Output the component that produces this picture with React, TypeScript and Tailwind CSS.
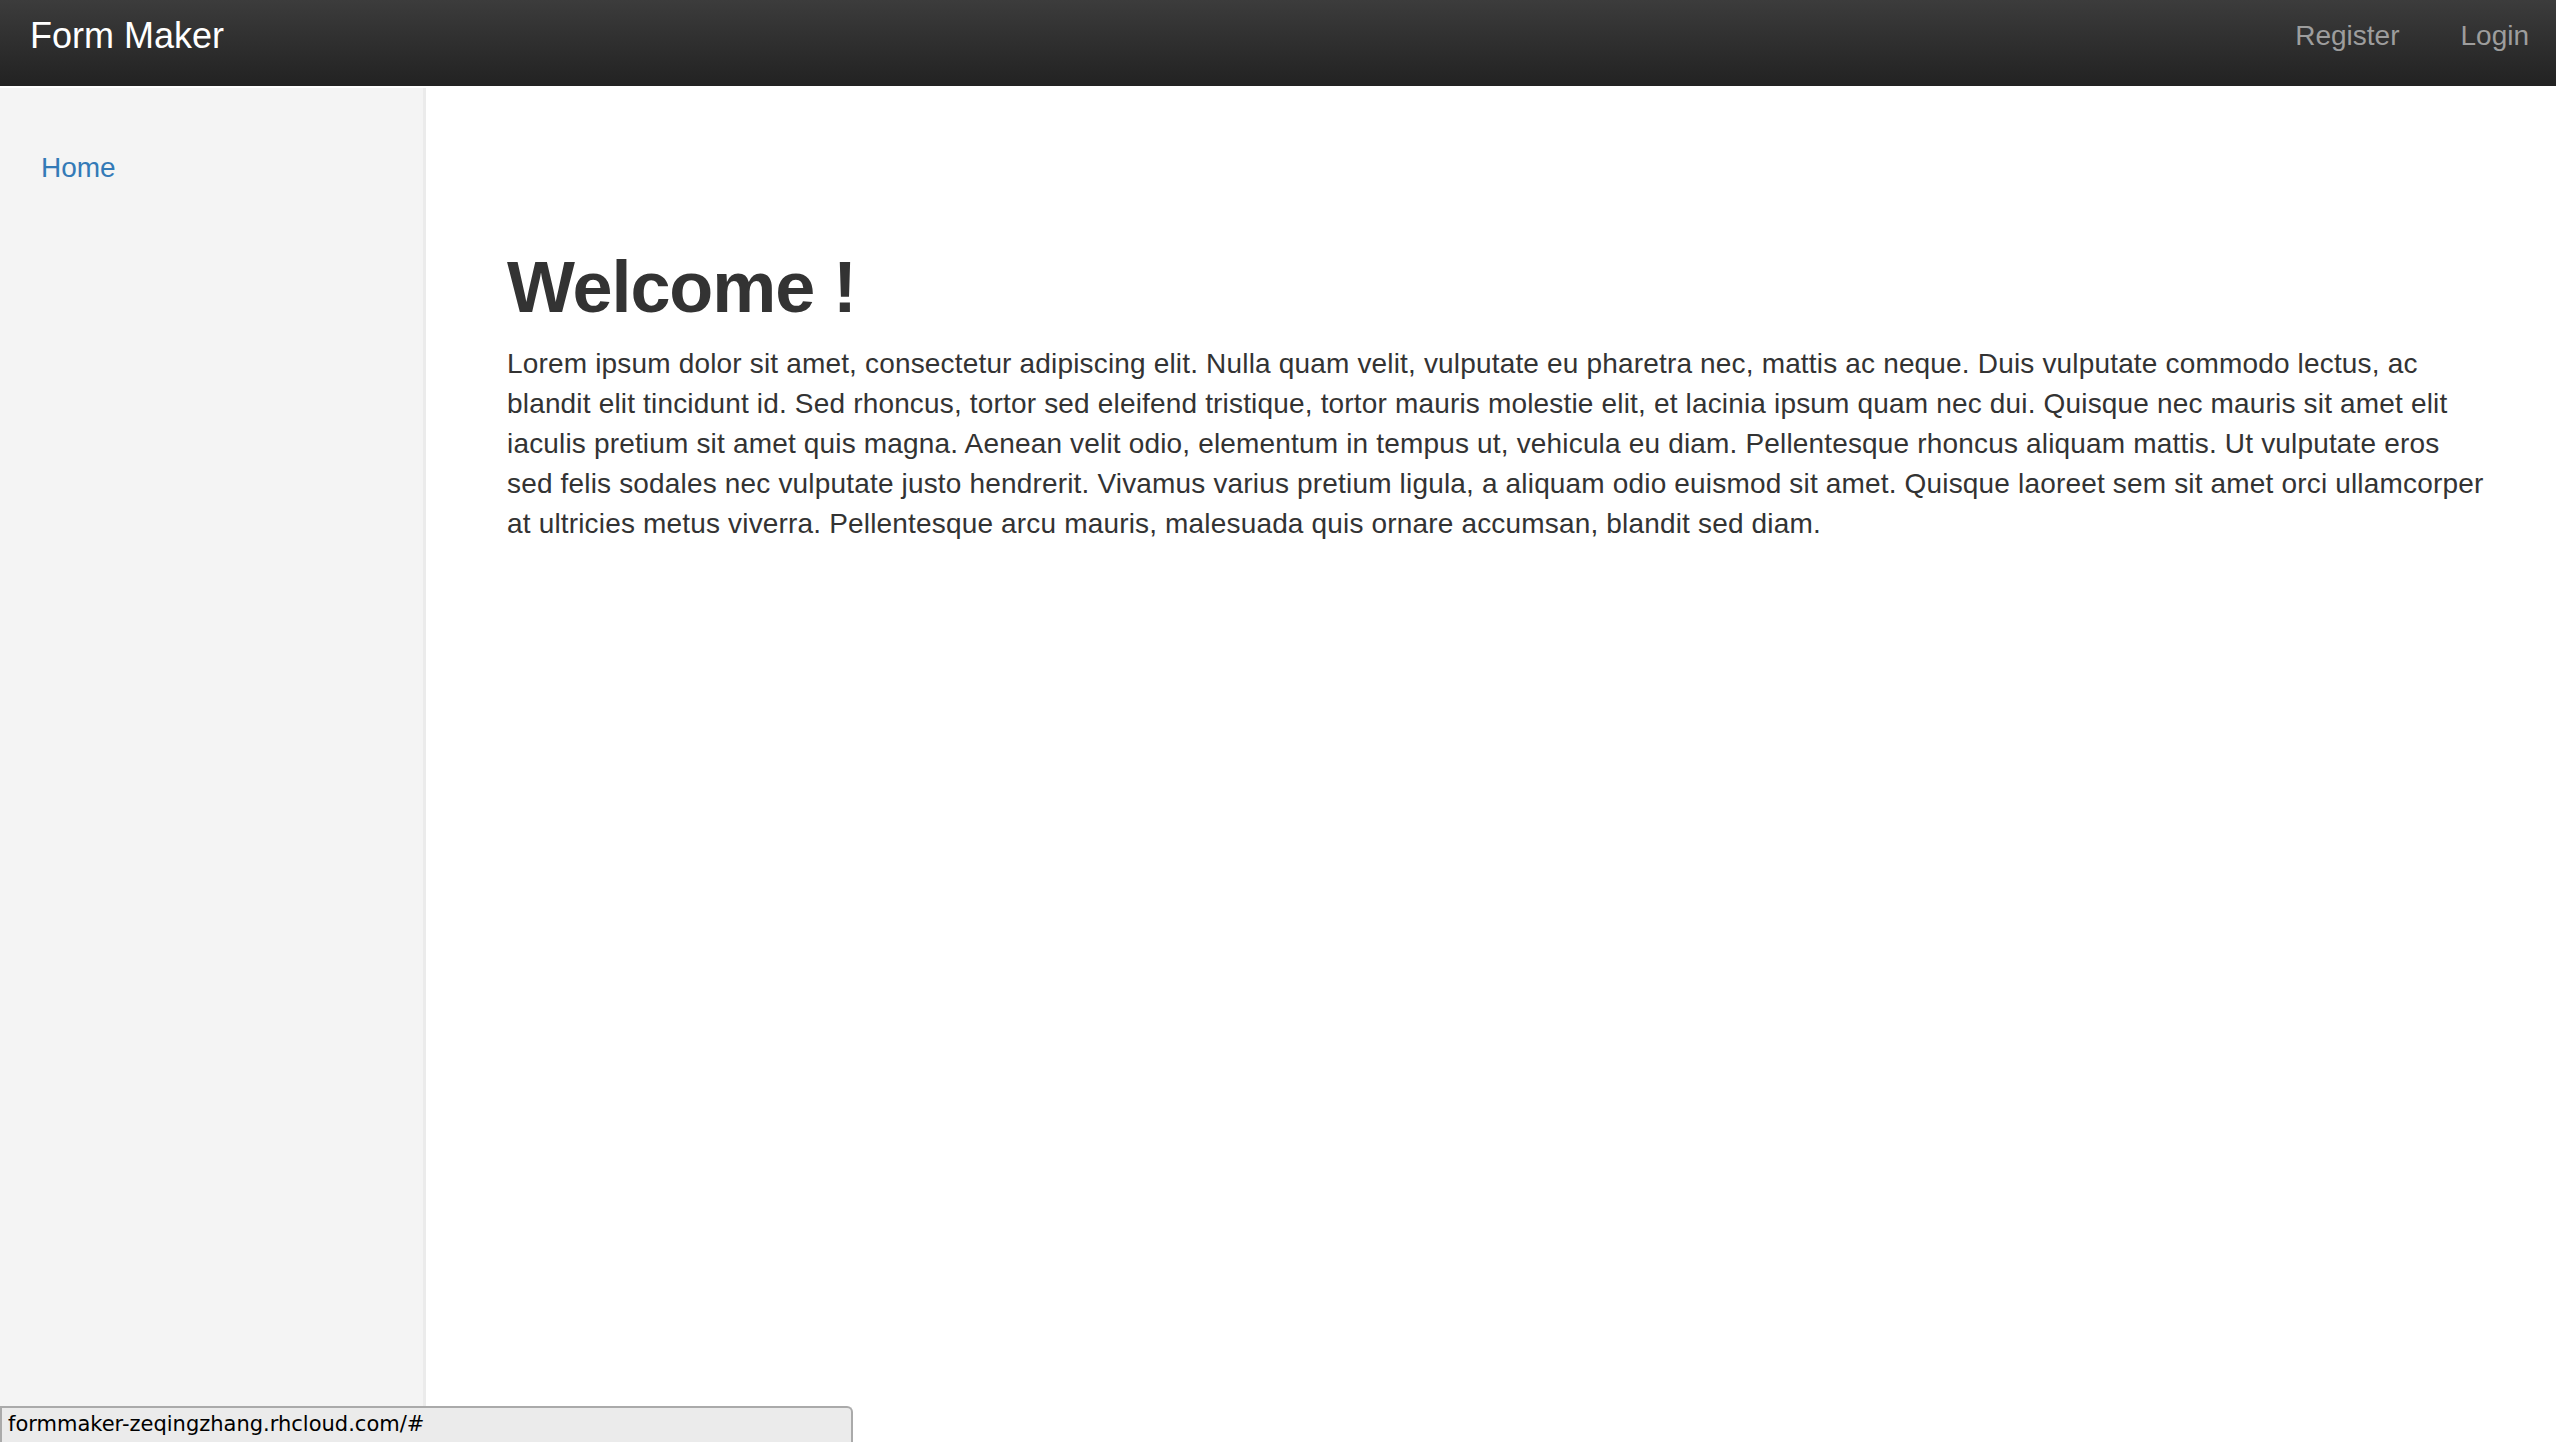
import React from "react";

const lines = [
  "Lorem ipsum dolor sit amet, consectetur adipiscing elit. Nulla quam velit, vulputate eu pharetra nec, mattis ac neque. Duis vulputate commodo lectus, ac",
  "blandit elit tincidunt id. Sed rhoncus, tortor sed eleifend tristique, tortor mauris molestie elit, et lacinia ipsum quam nec dui. Quisque nec mauris sit amet elit",
  "iaculis pretium sit amet quis magna. Aenean velit odio, elementum in tempus ut, vehicula eu diam. Pellentesque rhoncus aliquam mattis. Ut vulputate eros",
  "sed felis sodales nec vulputate justo hendrerit. Vivamus varius pretium ligula, a aliquam odio euismod sit amet. Quisque laoreet sem sit amet orci ullamcorper",
  "at ultricies metus viverra. Pellentesque arcu mauris, malesuada quis ornare accumsan, blandit sed diam.",
];

export default function App() {
  return (
    <div
      className="relative flex h-[1442px] flex-col overflow-hidden bg-white text-[#333]"
      style={{ fontFamily: '"Liberation Sans", Arial, sans-serif' }}
    >
      <nav className="flex h-[86px] shrink-0 items-start justify-between bg-gradient-to-b from-[#3c3c3c] to-[#222] pt-[16px]">
        <a href="#" className="pl-[30px] text-[36px] leading-[40px] text-white">
          Form Maker
        </a>
        <div className="flex gap-[61px] pr-[27px] text-[28px] leading-[40px] text-[#9d9d9d]">
          <a href="#">Register</a>
          <a href="#">Login</a>
        </div>
      </nav>
      <div className="mt-[2px] flex flex-1">
        <aside className="w-[426px] shrink-0 border-r-[3px] border-[#ebebeb] bg-[#f4f4f4] pl-[41px] pt-[60px]">
          <a href="#" className="text-[28px] leading-[40px] text-[#337ab7]">
            Home
          </a>
        </aside>
        <main className="flex-1 pl-[81px] pr-[40px] pt-[160px]">
          <h1 className="mb-[17px] text-[72px] font-bold leading-[79px] tracking-[-1.1px] text-[#333]">
            Welcome !
          </h1>
          <p className="whitespace-nowrap text-[28px] leading-[40px] tracking-[0.17px]">
            {lines.map((l, i) => (
              <React.Fragment key={i}>
                {l}
                {i < lines.length - 1 && <br />}
              </React.Fragment>
            ))}
          </p>
        </main>
      </div>
      <div
        className="absolute bottom-0 left-0 h-[36px] w-[853px] rounded-tr-[6px] border-l-2 border-r-2 border-t-2 border-[#aaa] bg-[#ebebeb] pl-[6px] text-[21px] leading-[32px] text-black"
        style={{ fontFamily: '"DejaVu Sans", sans-serif' }}
      >
        formmaker-zeqingzhang.rhcloud.com/#
      </div>
    </div>
  );
}
